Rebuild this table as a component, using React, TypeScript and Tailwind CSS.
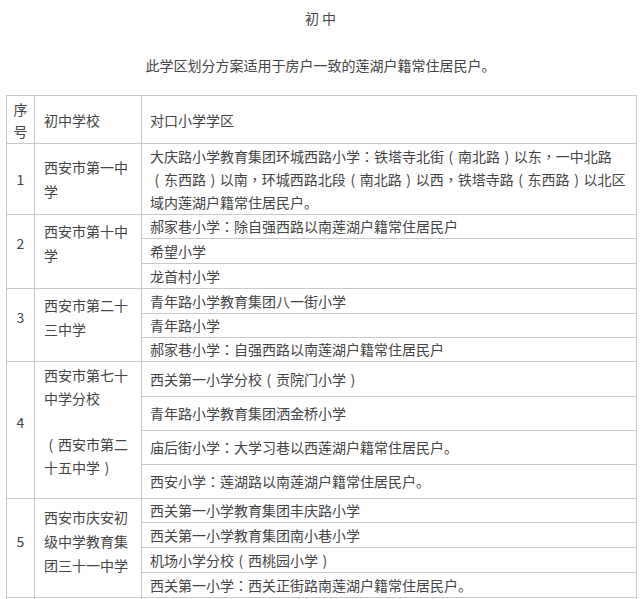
import React from "react";

const font = { fontFamily: '"Noto Sans CJK SC", "Noto Sans", sans-serif' };
const tcFont = { fontFamily: '"Noto Sans CJK TC", "Noto Sans CJK SC", sans-serif' };

function T({ s }: { s: string }) {
  const parts = s.split(/([：，（）])/);
  return (
    <>
      {parts.map((p, i) => {
        if (p === "：" || p === "，")
          return (
            <span key={i} style={tcFont}>
              {p}
            </span>
          );
        if (p === "（")
          return (
            <span key={i} className="px-[4.6px]">
              (
            </span>
          );
        if (p === "）")
          return (
            <span key={i} className="px-[4.6px]">
              )
            </span>
          );
        return <React.Fragment key={i}>{p}</React.Fragment>;
      })}
    </>
  );
}

type Sub = { text: string; h: string };
type Row = { no: string; school: React.ReactNode; subs: Sub[]; leftCls: string };

const rows: Row[] = [
  {
    no: "1",
    school: "西安市第一中学",
    leftCls: "align-middle",
    subs: [
      {
        text: "大庆路小学教育集团环城西路小学：铁塔寺北街（南北路）以东，一中北路（东西路）以南，环城西路北段（南北路）以西，铁塔寺路（东西路）以北区域内莲湖户籍常住居民户。",
        h: "h-[71px]",
      },
    ],
  },
  {
    no: "2",
    school: "西安市第十中学",
    leftCls: "align-middle pb-[18px]",
    subs: [
      { text: "郝家巷小学：除自强西路以南莲湖户籍常住居民户", h: "h-[24px]" },
      { text: "希望小学", h: "h-[25px]" },
      { text: "龙首村小学", h: "h-[25px]" },
    ],
  },
  {
    no: "3",
    school: "西安市第二十三中学",
    leftCls: "align-middle pb-[16px]",
    subs: [
      { text: "青年路小学教育集团八一街小学", h: "h-[25px]" },
      { text: "青年路小学", h: "h-[24px]" },
      { text: "郝家巷小学：自强西路以南莲湖户籍常住居民户", h: "h-[24px]" },
    ],
  },
  {
    no: "4",
    school: (
      <div className="leading-[23px]">
        <T s="西安市第七十中学分校" />
        <br />
        <br />
        <T s="（西安市第二十五中学）" />
      </div>
    ),
    leftCls: "align-middle pb-[17px]",
    subs: [
      { text: "西关第一小学分校（贡院门小学）", h: "h-[35px]" },
      { text: "青年路小学教育集团洒金桥小学", h: "h-[34px]" },
      { text: "庙后街小学：大学习巷以西莲湖户籍常住居民户。", h: "h-[34px]" },
      { text: "西安小学：莲湖路以南莲湖户籍常住居民户。", h: "h-[34px]" },
    ],
  },
  {
    no: "5",
    school: "西安市庆安初级中学教育集团三十一中学",
    leftCls: "align-middle pb-[15px]",
    subs: [
      { text: "西关第一小学教育集团丰庆路小学", h: "h-[24px]" },
      { text: "西关第一小学教育集团南小巷小学", h: "h-[25px]" },
      { text: "机场小学分校（西桃园小学）", h: "h-[25px]" },
      { text: "西关第一小学：西关正街路南莲湖户籍常住居民户。", h: "h-[25px]" },
    ],
  },
];

const bd = "border-r border-b border-[#c9c9c9]";

export default function App() {
  return (
    <div className="w-[641px] h-[599px] overflow-hidden bg-white text-[14px] text-[#444444]" style={font}>
      <div className="pt-[8px] text-center leading-[20px]">初 中</div>
      <div className="mt-[27px] text-center leading-[20px]">
        此学区划分方案适用于房户一致的莲湖户籍常住居民户。
      </div>
      <table className="mt-[20px] ml-[6px] w-[631px] table-fixed border-separate border-spacing-0 border-l border-t border-[#c9c9c9] leading-[24px]">
        <colgroup>
          <col className="w-[28px]" />
          <col className="w-[107px]" />
          <col className="w-[495px]" />
        </colgroup>
        <tbody>
          <tr className="h-[48px]">
            <td className={`${bd} text-center align-middle px-0`}>
              <div className="leading-[22px]">
                序<br />号
              </div>
            </td>
            <td className={`${bd} px-[9px] align-middle`}>初中学校</td>
            <td className={`${bd} pl-[8px] pr-[2px] align-middle`}>对口小学学区</td>
          </tr>
          {rows.map((r) =>
            r.subs.map((s, i) => (
              <tr key={r.no + "-" + i} className={s.h}>
                {i === 0 && (
                  <>
                    <td rowSpan={r.subs.length} className={`${bd} text-center px-0 ${r.leftCls}`}>
                      {r.no}
                    </td>
                    <td rowSpan={r.subs.length} className={`${bd} px-[9px] ${r.leftCls}`}>
                      {r.school}
                    </td>
                  </>
                )}
                <td className={`${bd} pl-[8px] pr-[2px] py-0 align-middle leading-[23px]`}>
                  <T s={s.text} />
                </td>
              </tr>
            ))
          )}
          <tr className="h-[30px]">
            <td className={bd}></td>
            <td className={bd}></td>
            <td className={bd}></td>
          </tr>
        </tbody>
      </table>
    </div>
  );
}
